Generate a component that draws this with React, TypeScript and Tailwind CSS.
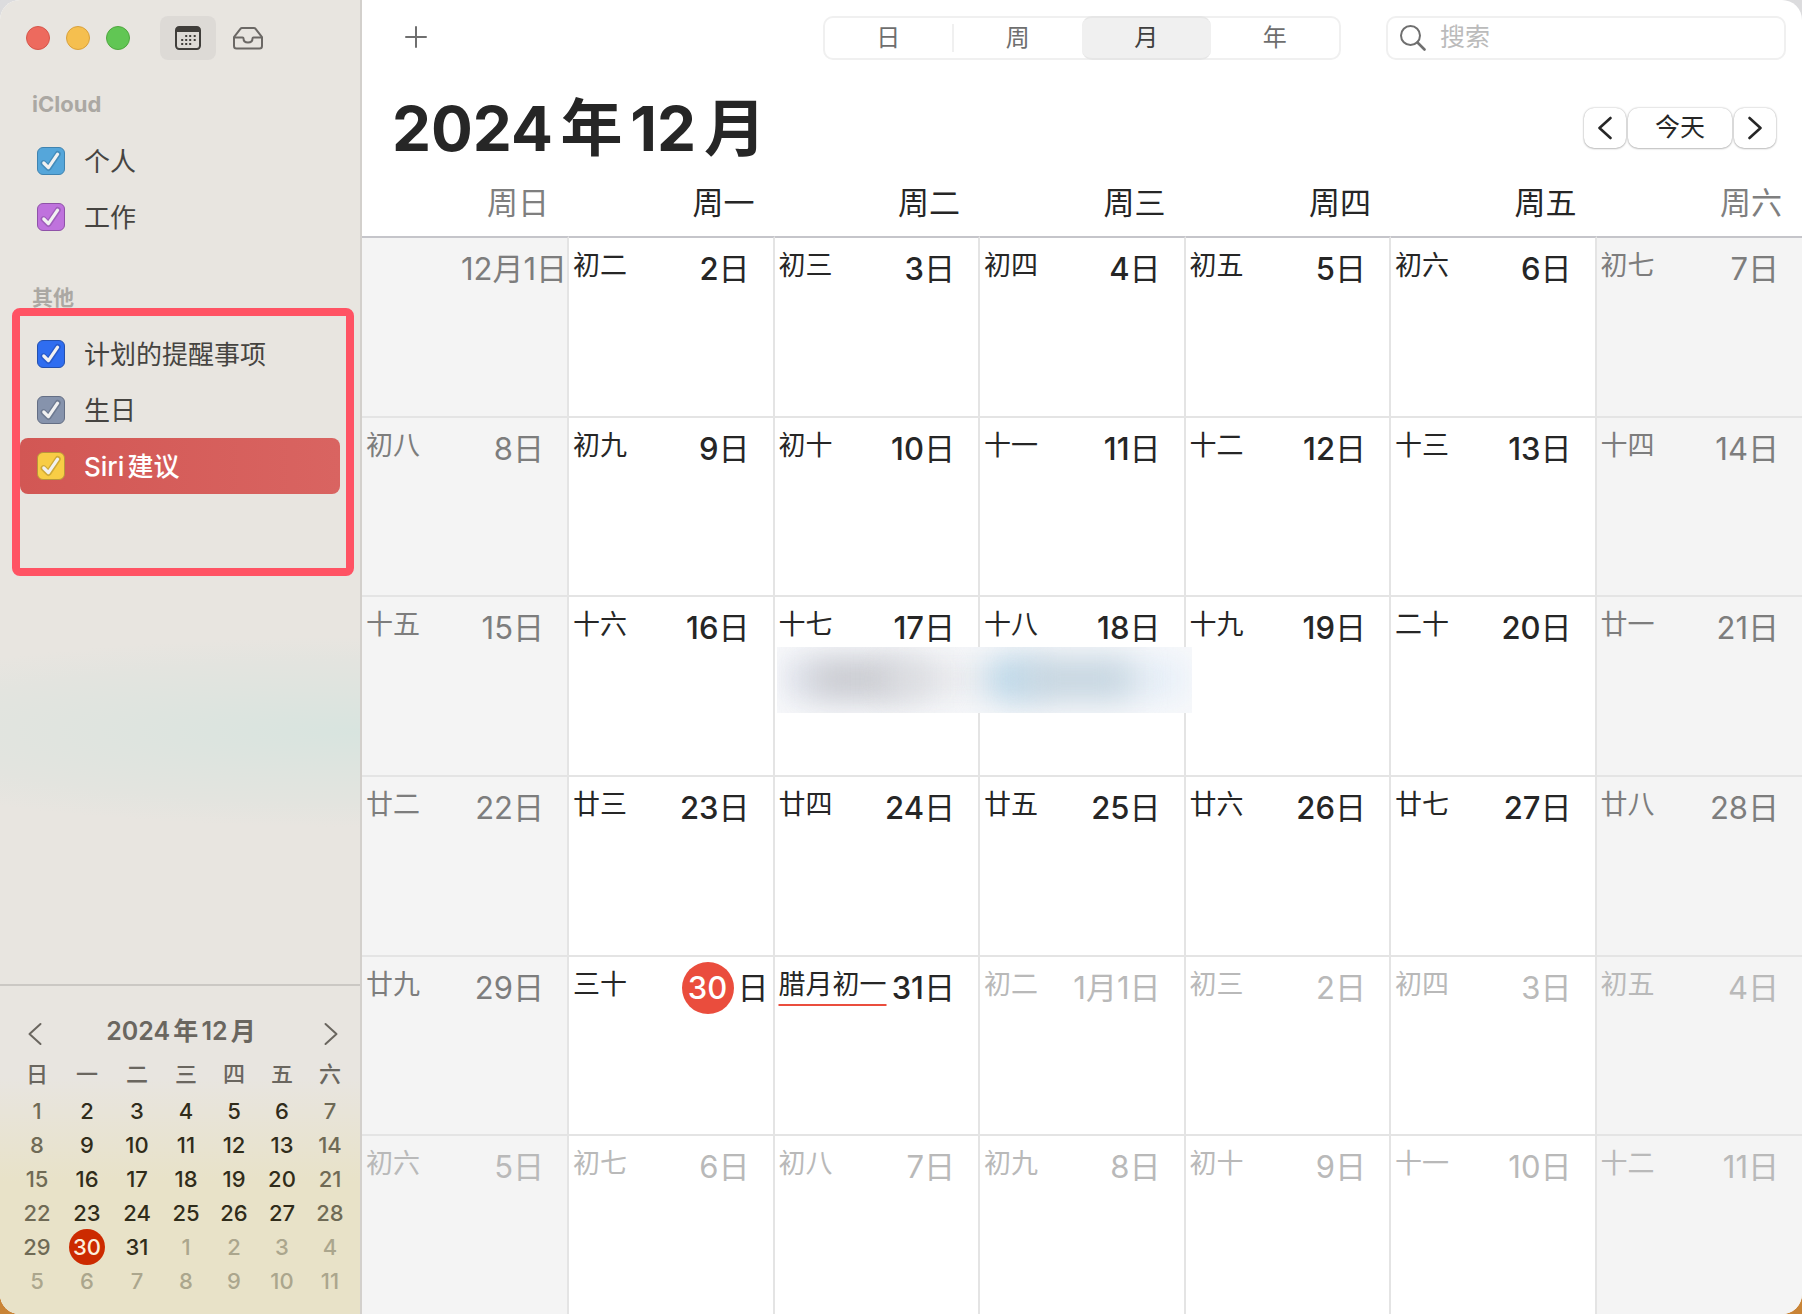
import { useState } from "react";

const CALENDARS = [
  { name: "个人", color: "bg-[#55a6da] border-[#3f83b0]", groove: "#3f83b0" },
  { name: "工作", color: "bg-[#bf72dd] border-[#8f52a8]", groove: "#9658b0" },
];

const OTHERS = [
  { name: "计划的提醒事项", color: "bg-[#2f6df0] border-[#2450ad]", groove: "#2554c0" },
  { name: "生日", color: "bg-[#8693ac] border-[#646e84]", groove: "#667188" },
  { name: "Siri建议", color: "bg-[#f8cd45] border-[#b8963a]", groove: "#c29d33", selected: true },
];

const WEEKDAYS = ["日", "一", "二", "三", "四", "五", "六"];
const VIEWS = ["日", "周", "月", "年"];

const WEEKS = [
  [["", "12月1日"], ["初二", "2日"], ["初三", "3日"], ["初四", "4日"], ["初五", "5日"], ["初六", "6日"], ["初七", "7日"]],
  [["初八", "8日"], ["初九", "9日"], ["初十", "10日"], ["十一", "11日"], ["十二", "12日"], ["十三", "13日"], ["十四", "14日"]],
  [["十五", "15日"], ["十六", "16日"], ["十七", "17日"], ["十八", "18日"], ["十九", "19日"], ["二十", "20日"], ["廿一", "21日"]],
  [["廿二", "22日"], ["廿三", "23日"], ["廿四", "24日"], ["廿五", "25日"], ["廿六", "26日"], ["廿七", "27日"], ["廿八", "28日"]],
  [["廿九", "29日"], ["三十", "30日"], ["腊月初一", "31日"], ["初二", "1月1日"], ["初三", "2日"], ["初四", "3日"], ["初五", "4日"]],
  [["初六", "5日"], ["初七", "6日"], ["初八", "7日"], ["初九", "8日"], ["初十", "9日"], ["十一", "10日"], ["十二", "11日"]],
];

type Calendar = { name: string; color: string; groove: string; selected?: boolean };

function CalendarRow({ name, color, groove, selected }: Calendar) {
  const [on, setOn] = useState(true);
  return (
    <label
      className={`flex h-14 items-center rounded-lg pl-[17px] text-[26px] ${
        selected ? "bg-linear-to-r from-[#d25754] to-[#d96461] font-medium text-white" : "text-[#464441]"
      }`}
    >
      <span className="relative size-7">
        <input
          type="checkbox"
          checked={on}
          onChange={() => setOn(!on)}
          className={`block size-7 appearance-none rounded-md border ${color}`}
        />
        {on && (
          <svg viewBox="0 0 28 28" className="pointer-events-none absolute inset-0 size-7" fill="none" strokeLinecap="round" strokeLinejoin="round">
            <path d="M6.6 16.2 11.4 21 20.8 7" stroke={groove} strokeWidth="6" opacity="0.75" />
            <path d="M6.8 16 11.4 20.6 20.6 7.2" stroke="#f1f1f1" strokeWidth="3.2" />
          </svg>
        )}
      </span>
      <span className="pl-[19px]">{name}</span>
    </label>
  );
}

function Chevron({ dir, className }: { dir: "left" | "right"; className: string }) {
  return (
    <svg viewBox="0 0 14 24" className={className} fill="none" stroke="currentColor" strokeLinecap="round" strokeLinejoin="round">
      <path d={dir === "left" ? "M12.5 2 1.5 12 12.5 22" : "M1.5 2 12.5 12 1.5 22"} />
    </svg>
  );
}

function MiniMonth() {
  return (
    <section className="border-t-2 border-[#cbc8c4] pt-6 pr-1.5 pb-4 pl-3">
      <div className="flex h-11 items-center justify-between px-4 text-[#6a665f]">
        <button aria-label="上个月" className="pt-1">
          <Chevron dir="left" className="h-6 w-[14px] stroke-2" />
        </button>
        <h2 className="pr-1 text-[25px] font-semibold">2024年12月</h2>
        <button aria-label="下个月" className="pt-1">
          <Chevron dir="right" className="h-6 w-[14px] stroke-2" />
        </button>
      </div>
      <table className="w-full table-fixed text-center text-[22px] leading-[34px] font-medium">
        <thead>
          <tr className="h-10 text-[#6a665f]">
            {WEEKDAYS.map((d, i) => (
              <th key={d} className={`p-0 font-medium ${i < 3 ? "w-[50px]" : ""}`}>{d}</th>
            ))}
          </tr>
        </thead>
        <tbody>
          {WEEKS.map((week, w) => (
            <tr key={w}>
              {week.map(([, label], i) => {
                const day = label.replace(/^\d+月/, "").replace("日", "");
                const next = w === 5 || (w === 4 && i > 2);
                const tone = next ? "text-[#aba68d]" : i === 0 || i === 6 ? "text-[#6f6a55]" : "text-[#302c1a]";
                return (
                  <td key={i} className={`h-[34px] p-0 ${tone}`}>
                    {day === "30" ? (
                      <span className="mx-auto -my-px block size-9 rounded-full bg-[#cc2a00] leading-9 text-[#fbeedd]">30</span>
                    ) : (
                      day
                    )}
                  </td>
                );
              })}
            </tr>
          ))}
        </tbody>
      </table>
    </section>
  );
}

function Sidebar() {
  return (
    <aside className="relative flex w-[362px] shrink-0 flex-col border-r-2 border-[#d3d0cc] bg-[#e8e5e0] bg-[radial-gradient(ellipse_580px_95px_at_360px_732px,#d8e4df,#dfe4df_45%,#e3e4df_75%,transparent),linear-gradient(to_bottom,transparent_82%,#e8e2c8_90%)]">
      <div className="flex h-[76px] items-center pl-[26px]">
        <div className="flex gap-4">
          <button aria-label="关闭" className="size-6 rounded-full border border-[#d6564b] bg-[#ed6a5e]" />
          <button aria-label="最小化" className="size-6 rounded-full border border-[#d9a13c] bg-[#f5bf4f]" />
          <button aria-label="缩放" className="size-6 rounded-full border border-[#4fa73f] bg-[#61c654]" />
        </div>
        <button aria-label="日历" className="ml-[30px] flex h-11 w-14 items-center justify-center rounded-lg bg-[#dddad6] text-[#403e3b]">
          <svg viewBox="0 0 26 24" className="h-6 w-[26px]" fill="currentColor">
            <rect x="1" y="1" width="24" height="22" rx="3.2" fill="none" stroke="currentColor" strokeWidth="2" />
            <path d="M1 6V4a3 3 0 0 1 3-3h18a3 3 0 0 1 3 3v2z" />
            {[[10, 10], [14, 10], [18.5, 10], [6, 14], [10, 14], [14, 14], [18.5, 14], [6, 18], [10, 18], [14, 18]].map(([x, y]) => (
              <rect key={`${x}-${y}`} x={x + 0.2} y={y - 1} width="2" height="2" />
            ))}
          </svg>
        </button>
        <button aria-label="收件箱" className="ml-4 text-[#6b6865]">
          <svg viewBox="0 0 32 24" className="h-6 w-8" fill="none" stroke="currentColor" strokeWidth="2" strokeLinejoin="round">
            <path d="M2 11.2 8.4 2.8Q9 2 10 2h12q1 0 1.600.8L30 11.200V20q0 2.500-2.500 2.500h-23Q2 22.500 2 20z" />
            <path d="M2 11.500h8.500q1 0 1 1c0 2.500 1.800 4 4.500 4s4.500-1.500 4.500-4q0-1 1-1H30" />
          </svg>
        </button>
      </div>
      <div className="flex flex-1 flex-col pr-5 pl-5">
        <h3 className="pt-3 pl-3 text-[22px] leading-8 font-bold text-[#aba8a3]">iCloud</h3>
        <div className="pt-[13px]">
          {CALENDARS.map((c) => (
            <CalendarRow key={c.name} {...c} />
          ))}
        </div>
        <h3 className="pt-[37px] pl-3 text-[21px] leading-8 font-bold text-[#aba8a3]">其他</h3>
        <div className="relative pt-3">
          {OTHERS.map((c) => (
            <CalendarRow key={c.name} {...c} />
          ))}
          <div className="pointer-events-none absolute -top-1.5 -right-3.5 -left-2 h-[268px] rounded-lg border-8 border-[#ff5364]" />
        </div>
      </div>
      <MiniMonth />
    </aside>
  );
}

function Toolbar() {
  return (
    <div className="flex h-[76px] items-center pr-4 pl-[43px]">
      <button aria-label="新建日程" className="pb-0.5 text-[#6f6f6f]">
        <svg viewBox="0 0 22 22" className="size-[22px]" fill="none" stroke="currentColor" strokeWidth="2" strokeLinecap="round">
          <path d="M11 1v20M1 11h20" />
        </svg>
      </button>
      <div className="mr-[45px] ml-auto flex h-11 w-[518px] rounded-[10px] border-2 border-[#f0f0f0] text-2xl text-[#6e6e6e]">
        {VIEWS.map((v) => (
          <button
            key={v}
            className={
              v === "月"
                ? "-my-[2px] flex-1 rounded-[10px] border-y-2 border-[#e6e6e6] bg-[#f0f0f0] text-[#3f3f3f]"
                : "flex flex-1 items-center justify-center"
            }
          >
            {v === "日" ? (
              <span className="flex h-7 flex-1 items-center justify-center border-r-2 border-[#f0f0f0]">{v}</span>
            ) : (
              v
            )}
          </button>
        ))}
      </div>
      <label className="flex h-11 w-[400px] items-center gap-3.5 rounded-[10px] border-2 border-[#f0f0f0] pl-3">
        <svg viewBox="0 0 26 26" className="size-[26px] shrink-0 text-[#6f6f6f]" fill="none" stroke="currentColor" strokeLinecap="round">
          <circle cx="10.500" cy="10.500" r="9.500" strokeWidth="2" />
          <path d="m17.500 17.500 7 7" strokeWidth="2.600" />
        </svg>
        <input aria-label="搜索" placeholder="搜索" className="w-full text-[25px] outline-none placeholder:text-[#bbbbbb]" />
      </label>
    </div>
  );
}

function EventBlur() {
  return (
    <div className="absolute top-[50px] left-0.5 z-10 h-[66px] w-[415px] overflow-hidden bg-[#f8f9fb]">
      <div className="absolute top-3 left-2 h-10 w-[400px] bg-linear-to-r from-[#d9dde8] via-[#ebecef] via-45% to-[#e3edf8] blur-lg" />
      <div className="absolute top-4 left-9 h-8 w-[90px] bg-[#c6c7cc] blur-lg" />
      <div className="absolute top-4 left-28 h-8 w-12 bg-[#dadbdf] blur-lg" />
      <div className="absolute top-3.5 left-[212px] h-9 w-12 bg-[#b5d6ea] blur-lg" />
      <div className="absolute top-3.5 left-[245px] h-9 w-[110px] bg-[#c2d3de] blur-lg" />
    </div>
  );
}

function DayCell({ lunar, label, week, index }: { lunar: string; label: string; week: number; index: number }) {
  const weekend = index === 0 || index === 6;
  const next = week === 5 || (week === 4 && index > 2);
  const today = week === 4 && index === 1;
  const first = week === 0 && index === 0;
  const tone = next ? "text-[#b9b9b9]" : weekend ? "text-[#7d7d7d]" : "text-[#262626]";
  return (
    <td
      className={`relative border-t-2 p-0 align-top ${index < 6 ? "border-r-2 border-r-[#e4e4e4]" : ""} ${
        week === 0 ? "border-t-[#c5c5ca]" : "border-t-[#e4e4e4]"
      } ${weekend ? "bg-[#f4f4f4]" : ""} ${tone}`}
    >
      <div className={`flex justify-between pt-[5px] pl-1 whitespace-nowrap ${first ? "" : today ? "pr-1" : "pr-[23px]"}`}>
        <span
          className={`text-[27px] leading-[46px] ${
            lunar === "腊月初一" ? "underline decoration-[#ea4d3d] decoration-2 underline-offset-[10px]" : ""
          }`}
        >
          {lunar}
        </span>
        {today ? (
          <span className="flex gap-1 text-[31px] leading-[52px]">
            <span className="size-[52px] rounded-full bg-[#ea4d3d] text-center font-medium text-white">30</span>日
          </span>
        ) : (
          <span className="text-[31px] leading-[52px] [text-autospace:no-autospace]">
            {next || weekend ? (
              label
            ) : (
              <>
                <span className="font-medium">{label.slice(0, -1)}</span>日
              </>
            )}
          </span>
        )}
      </div>
      {week === 2 && index === 2 && <EventBlur />}
    </td>
  );
}

export default function App() {
  return (
    <div className="h-screen bg-linear-to-b from-[#dcdcde] from-5% to-[#c98436] to-10% font-[Inter,'Noto_Sans_CJK_SC',sans-serif] [text-autospace:normal]">
      <div className="flex h-full overflow-hidden rounded-[20px] bg-white">
        <Sidebar />
        <main className="flex min-w-0 flex-1 flex-col">
          <Toolbar />
          <div className="flex h-[104px] items-center justify-between pr-[26px] pl-[30px]">
            <h1 className="text-[62px] font-bold text-[#262626]">2024年12月</h1>
            <div className="flex gap-0.5 text-[25px] text-[#262626]">
              <button aria-label="上个月" className="flex h-10 w-[42px] items-center justify-center rounded-[10px] shadow-[0_0_2px_#00000050,0_1px_2px_#00000030]">
                <Chevron dir="left" className="h-6 w-[14px] stroke-[2.600]" />
              </button>
              <button className="h-10 w-[104px] rounded-[10px] shadow-[0_0_2px_#00000050,0_1px_2px_#00000030]">今天</button>
              <button aria-label="下个月" className="flex h-10 w-[42px] items-center justify-center rounded-[10px] shadow-[0_0_2px_#00000050,0_1px_2px_#00000030]">
                <Chevron dir="right" className="h-6 w-[14px] stroke-[2.600]" />
              </button>
            </div>
          </div>
          <div className="min-h-0 flex-1">
            <table className="h-full w-full table-fixed border-separate border-spacing-0">
              <thead>
                <tr className="h-14 text-right text-[31px] leading-[46px]">
                  {WEEKDAYS.map((d, i) => (
                    <th
                      key={d}
                      className={`p-0 pr-5 align-top font-normal ${i === 0 ? "w-[207px]" : ""} ${
                        i === 0 || i === 6 ? "text-[#7f7f7f]" : "text-[#262626]"
                      }`}
                    >
                      周{d}
                    </th>
                  ))}
                </tr>
              </thead>
              <tbody>
                {WEEKS.map((week, w) => (
                  <tr key={w}>
                    {week.map(([lunar, label], i) => (
                      <DayCell key={i} lunar={lunar} label={label} week={w} index={i} />
                    ))}
                  </tr>
                ))}
              </tbody>
            </table>
          </div>
        </main>
      </div>
    </div>
  );
}
